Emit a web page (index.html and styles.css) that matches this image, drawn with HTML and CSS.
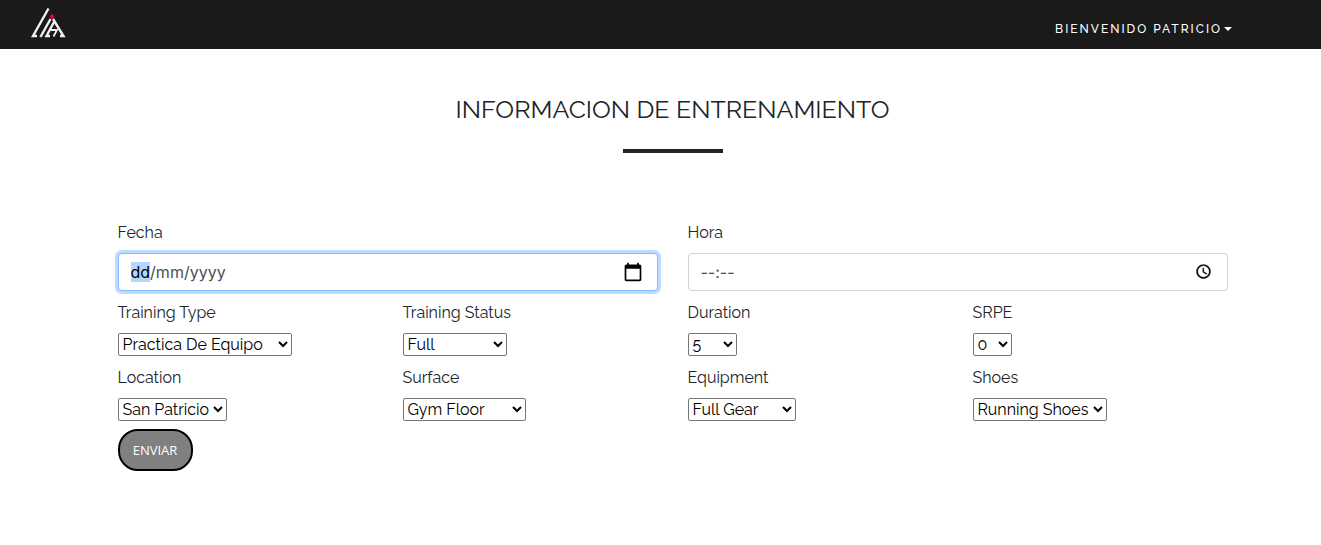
FILE: index.html
```html
<!DOCTYPE html>
<html lang="es">
<head>
<meta charset="utf-8">
<meta name="viewport" content="width=device-width, initial-scale=1">
<title>Informacion de entrenamiento</title>
<link rel="stylesheet" href="styles.css">
</head>
<body>
<header class="navbar">
  <a class="brand" href="#" aria-label="Inicio">
    <svg class="brand-logo" viewBox="0 0 36 32" aria-hidden="true">
      <g fill="none" stroke="#f0f0f0" stroke-width="2.4">
        <path d="M18.500 1.500L3 29H7"/>
        <path d="M20.500 12L10.500 30"/>
        <path d="M23 12L33.500 29H30"/>
        <path d="M24 15L16.500 29H20"/>
        <path d="M20.500 23H27L23.500 29.500" stroke-width="1.800"/>
      </g>
      <path d="M22 6.500L24.300 9.500L22 13L19.700 9.500Z" fill="#e4002b"/>
    </svg>
  </a>
  <button class="user-menu" type="button" aria-haspopup="true">Bienvenido Patricio<span class="caret"></span></button>
</header>
<main class="page">
  <h1 class="title">INFORMACION DE ENTRENAMIENTO</h1>
  <hr class="divider">
  <form class="form">
    <div class="row row-two">
      <div class="field">
        <label for="fecha">Fecha</label>
        <div class="control">
          <input class="text-input date-input" id="fecha" type="text" value="dd/mm/yyyy" autocomplete="off" spellcheck="false">
          <svg class="control-icon calendar" viewBox="0 0 24 24" aria-hidden="true"><path d="M20 3h-1V1h-2v2H7V1H5v2H4c-1.100 0-2 .9-2 2v16c0 1.100.9 2 2 2h16c1.100 0 2-.9 2-2V5c0-1.100-.9-2-2-2zm0 18H4V8h16v13z"/></svg>
        </div>
      </div>
      <div class="field">
        <label for="hora">Hora</label>
        <div class="control">
          <input class="text-input" id="hora" type="text" value="--:--" autocomplete="off" spellcheck="false">
          <svg class="control-icon clock" viewBox="0 0 24 24" aria-hidden="true"><path d="M11.990 2C6.470 2 2 6.480 2 12s4.470 10 9.990 10C17.520 22 22 17.520 22 12S17.520 2 11.990 2zM12 20c-4.420 0-8-3.580-8-8s3.580-8 8-8 8 3.580 8 8-3.580 8-8 8zm.5-13H11v6l5.250 3.150.75-1.230-4.500-2.670z" stroke="#000" stroke-width=".4"/></svg>
        </div>
      </div>
    </div>
    <div class="row">
      <div class="field"><label for="type">Training Type</label><select class="select w-type" id="type"><option>Practica De Equipo</option></select></div>
      <div class="field"><label for="status">Training Status</label><select class="select w-status" id="status"><option>Full</option></select></div>
      <div class="field"><label for="duration">Duration</label><select class="select w-duration" id="duration"><option>5</option></select></div>
      <div class="field"><label for="srpe">SRPE</label><select class="select w-srpe" id="srpe"><option>0</option></select></div>
    </div>
    <div class="row">
      <div class="field"><label for="location">Location</label><select class="select w-location" id="location"><option>San Patricio</option></select></div>
      <div class="field"><label for="surface">Surface</label><select class="select w-surface" id="surface"><option>Gym Floor</option></select></div>
      <div class="field"><label for="equipment">Equipment</label><select class="select w-equipment" id="equipment"><option>Full Gear</option></select></div>
      <div class="field"><label for="shoes">Shoes</label><select class="select w-shoes" id="shoes"><option>Running Shoes</option></select></div>
    </div>
    <button class="submit" type="submit">ENVIAR</button>
  </form>
</main>
<script src="main.js"></script>
</body>
</html>
```
FILE: styles.css
```css
*, *::before, *::after { box-sizing: border-box; }

body {
  margin: 0;
  background: #fff;
  color: #212529;
  font-family: Raleway, Lato, sans-serif;
  font-size: 16px;
  line-height: 24px;
}

.navbar {
  display: flex;
  justify-content: space-between;
  align-items: center;
  padding: 7px 89px 6px 30px;
  background: #1a1a1a;
}

.brand { display: block; padding-bottom: 4px; }
.brand-logo { display: block; width: 36px; height: 32px; }

.user-menu {
  display: flex;
  align-items: center;
  gap: 2px;
  padding: 8px 0 0;
  border: 0;
  background: none;
  color: #fff;
  font: 500 12px/20px Raleway, Lato, sans-serif;
  letter-spacing: 2px;
  text-transform: uppercase;
  cursor: pointer;
}

.caret {
  border: 4px solid transparent;
  border-top-color: #fff;
  border-bottom: 0;
}

.page {
  max-width: 1164px;
  margin: 0 auto;
  padding: 45px 15px 32px 39px;
}

.title {
  margin: 0;
  font-size: 25px;
  font-weight: 400;
  line-height: 30px;
  text-align: center;
}

.divider {
  width: 100px;
  height: 4px;
  margin: 25px auto 68px;
  border: 0;
  background: #212529;
}

.row {
  display: grid;
  grid-template-columns: repeat(4, 1fr);
  gap: 30px;
  margin-bottom: 10px;
}
.row-two { grid-template-columns: repeat(2, 1fr); }

.field {
  display: flex;
  flex-direction: column;
  align-items: flex-start;
  gap: 8px;
}

.control { position: relative; width: 100%; }

.text-input {
  display: block;
  width: 100%;
  height: 38px;
  padding: 6px 12px;
  border: 1px solid #ced4da;
  border-radius: 4px;
  outline: 0;
  background: #fff;
  color: #495057;
  font: 16px/24px Inter, sans-serif;
}
.date-input {
  border-color: #80bdff;
  box-shadow: 0 0 0 3px #bfdbff;
}
.text-input::selection { background: #b3d7ff; color: #000; }

.control-icon { position: absolute; top: 0; bottom: 0; margin: auto 0; pointer-events: none; }
.calendar { right: 15px; width: 20px; height: 20px; }
.clock { right: 16px; bottom: 2px; width: 17px; height: 17px; }

.select {
  height: 23px;
  padding: 0;
  border: 1px solid #767676;
  border-radius: 2px;
  background-color: #fff;
  color: #000;
  font: 16px/20px Raleway, Lato, sans-serif;
}
.w-type { width: 174px; }
.w-status { width: 104px; }
.w-duration { width: 49px; }
.w-srpe { width: 39px; }
.w-location { width: 109px; }
.w-surface { width: 123px; }
.w-equipment { width: 108px; }
.w-shoes { width: 134px; }

.submit {
  display: block;
  width: 75px;
  height: 42px;
  margin-top: -2px;
  padding: 0;
  border: 2px solid #000;
  border-radius: 20px;
  background: #808080;
  color: #fff;
  font: 13px/20px "Open Sans", sans-serif;
}
```
FILE: main.js
```js
const dateInput = document.getElementById("fecha");
dateInput.focus();
dateInput.setSelectionRange(0, 2);
```
